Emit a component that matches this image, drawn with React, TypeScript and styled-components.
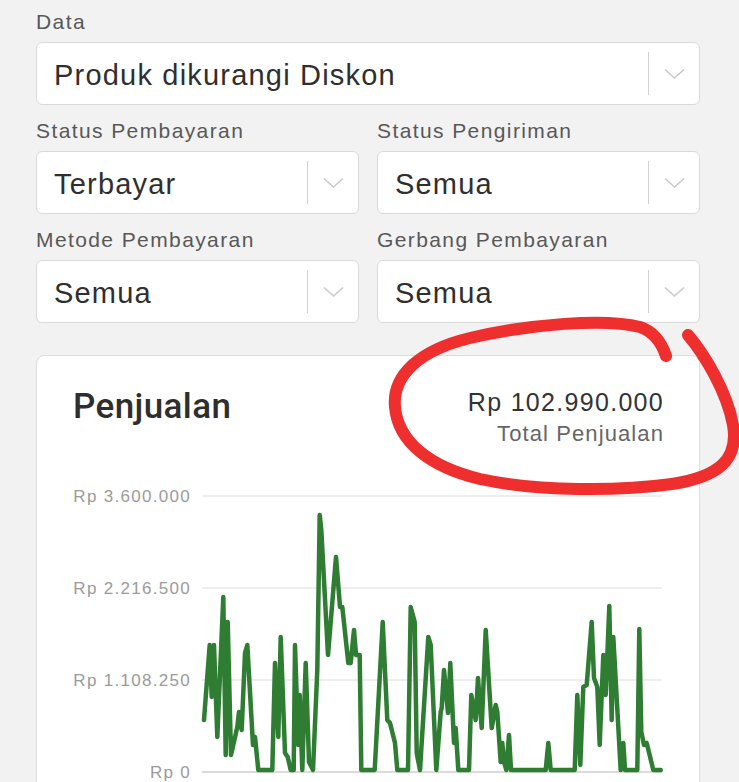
import React from "react";
import styled, { createGlobalStyle } from "styled-components";

const GlobalStyle = createGlobalStyle`
  html, body {
    margin: 0;
    padding: 0;
    background: #f2f2f2;
    overflow: hidden;
  }
  body {
    font-family: "Liberation Sans", Arial, sans-serif;
  }
  * { box-sizing: border-box; }
`;

const Root = styled.div`
  position: relative;
  width: 739px;
  height: 782px;
  overflow: hidden;
  padding: 10px 39px 0 36px;
`;

const Form = styled.div`
  display: flex;
  flex-direction: column;
  gap: 14px;
`;

const FieldGrid = styled.div`
  display: grid;
  grid-template-columns: 1fr 1fr;
  column-gap: 18px;
  row-gap: 14px;
`;

const Field = styled.div`
  display: flex;
  flex-direction: column;
`;

const Label = styled.div`
  font-size: 21px;
  line-height: 24px;
  color: #585858;
  letter-spacing: 1.4px;
  margin-bottom: 8px;
  white-space: nowrap;
`;

const SelectBox = styled.div`
  height: 63px;
  border: 1px solid #dadada;
  border-radius: 6px;
  background: #ffffff;
  display: flex;
  align-items: center;
`;

const SelectValue = styled.div`
  flex: 1;
  padding: 3px 0 0 17px;
  font-size: 29px;
  color: #2f2f2f;
  letter-spacing: 1.2px;
  white-space: nowrap;
  overflow: hidden;
`;

const Separator = styled.div`
  width: 1px;
  height: 43px;
  background: #d2d2d2;
`;

const ChevronWrap = styled.div`
  width: 50px;
  display: flex;
  align-items: center;
  justify-content: center;
`;

const Card = styled.div`
  margin-top: 32px;
  background: #ffffff;
  border: 1px solid #dedede;
  border-radius: 8px;
  padding: 31px 36px 0;
  height: 520px;
`;

const CardHeader = styled.div`
  display: flex;
  justify-content: space-between;
  align-items: flex-start;
`;

const Title = styled.div`
  font-family: Roboto, "Liberation Sans", sans-serif;
  font-weight: 500;
  font-size: 35px;
  line-height: 40px;
  letter-spacing: 0.4px;
  color: #2e2e2e;
`;

const Summary = styled.div`
  display: flex;
  flex-direction: column;
  align-items: flex-end;
  margin-right: -1px;
`;

const SummaryValue = styled.div`
  font-size: 25px;
  line-height: 30px;
  letter-spacing: 1.3px;
  color: #333333;
`;

const SummaryLabel = styled.div`
  margin-top: 3px;
  font-size: 22px;
  line-height: 28px;
  letter-spacing: 1.1px;
  color: #666666;
`;

const ChartSvg = styled.svg`
  display: block;
  margin-top: 32px;
  overflow: visible;
`;

const AxisText = styled.text`
  font-family: "Liberation Sans", Arial, sans-serif;
  font-size: 17px;
  letter-spacing: 1.3px;
  fill: #9b9b9b;
`;

const Annotation = styled.svg`
  position: absolute;
  top: 0;
  left: 0;
  pointer-events: none;
`;

const Chevron = () => (
  <svg width="21" height="12" viewBox="0 0 21 12">
    <path d="M1 1.5 L10.5 10 L20 1.5" fill="none" stroke="#c9c9c9" strokeWidth="1.5" />
  </svg>
);

const Select = ({ value }: { value: string }) => (
  <SelectBox>
    <SelectValue>{value}</SelectValue>
    <Separator />
    <ChevronWrap>
      <Chevron />
    </ChevronWrap>
  </SelectBox>
);

const SelectField = ({ label, value }: { label: string; value: string }) => (
  <Field>
    <Label>{label}</Label>
    <Select value={value} />
  </Field>
);

// page coordinates of the sales line
const points: [number, number][] = [
  [205, 720], [210.7, 645], [212.7, 697], [215, 645], [218.3, 737], [224.3, 597],
  [226.7, 755], [228.7, 622], [232, 755], [238.3, 727], [240, 712], [242.7, 730],
  [246, 653], [248.3, 645], [254, 745], [256, 737], [259.3, 770], [273.3, 770],
  [276, 663], [279.3, 737], [281.7, 637], [286, 753], [288.7, 757], [291.7, 770],
  [294.7, 770], [296, 645], [299.3, 745], [300.7, 695], [303.3, 770], [306.7, 663],
  [310, 762], [314, 770], [318.3, 670], [320.7, 515], [322.3, 530], [329, 655],
  [337, 557], [341, 607], [343.3, 607], [349.3, 663], [351.7, 663], [355, 630],
  [357, 655], [360.7, 655], [362.3, 770], [375.7, 770], [383.7, 622], [388.3, 720],
  [391, 723], [396, 743], [398.3, 770], [409, 770], [411.7, 607], [415.7, 622],
  [417.7, 753], [421, 770], [429.3, 637], [431.7, 645], [437.3, 770], [441.7, 712],
  [442.7, 708], [445, 670], [449, 713], [451.3, 663], [455, 743], [456.7, 728],
  [459.3, 770], [470, 770], [472.3, 695], [476.7, 720], [479, 678], [482.7, 728],
  [486.7, 630], [492.7, 728], [496.7, 705], [498.3, 712], [501.7, 762], [503.3, 743],
  [505, 762], [507.3, 770], [510, 735], [512, 770], [546.7, 770], [549.3, 743],
  [551.7, 770], [575.7, 770], [578.3, 695], [581.3, 765], [584.3, 687], [587.7, 685],
  [592.7, 622], [595, 678], [598.3, 687], [600.7, 745], [604.3, 655], [606.7, 695],
  [610.3, 606], [612.7, 720], [614.3, 637], [621.7, 770], [624.3, 743], [626, 770],
  [638.3, 770], [640.3, 629], [642.3, 732], [645, 745], [647.7, 743], [654.3, 770],
  [661.7, 770],
];

const OX = 74;
const OY = 480;
const linePoints = points.map(([x, y]) => `${(x - OX).toFixed(1)},${(y - OY).toFixed(1)}`).join(" ");

const axis = [
  { label: "Rp 3.600.000", y: 16 },
  { label: "Rp 2.216.500", y: 108 },
  { label: "Rp 1.108.250", y: 200 },
  { label: "Rp 0", y: 292 },
];

const SalesChart = () => (
  <ChartSvg width="589" height="330" viewBox="0 0 589 330">
    {axis.map((a, i) => (
      <g key={a.label}>
        <line
          x1="129"
          x2="589"
          y1={a.y}
          y2={a.y}
          stroke={i === axis.length - 1 ? "#cfcfcf" : "#e8e8e8"}
          strokeWidth="1.5"
        />
        <AxisText x="118" y={a.y + 6} textAnchor="end">
          {a.label}
        </AxisText>
      </g>
    ))}
    <polyline
      points={linePoints}
      fill="none"
      stroke="#2e7d32"
      strokeWidth="4.5"
      strokeLinejoin="round"
      strokeLinecap="round"
    />
  </ChartSvg>
);

export default function App() {
  return (
    <>
      <GlobalStyle />
      <Root>
        <Form>
          <SelectField label="Data" value="Produk dikurangi Diskon" />
          <FieldGrid>
            <SelectField label="Status Pembayaran" value="Terbayar" />
            <SelectField label="Status Pengiriman" value="Semua" />
            <SelectField label="Metode Pembayaran" value="Semua" />
            <SelectField label="Gerbang Pembayaran" value="Semua" />
          </FieldGrid>
        </Form>
        <Card>
          <CardHeader>
            <Title>Penjualan</Title>
            <Summary>
              <SummaryValue>Rp 102.990.000</SummaryValue>
              <SummaryLabel>Total Penjualan</SummaryLabel>
            </Summary>
          </CardHeader>
          <SalesChart />
        </Card>
        <Annotation width="739" height="782" viewBox="0 0 739 782">
          <path
            d="M688 335 C705 355 727 392 733 425 C739 460 718 477 672 484 C620 491 540 492 480 479 C430 467 398 442 395 407 C392 375 420 350 470 338 C530 324 605 318 640 327 C655 332 662 344 666 356"
            fill="none"
            stroke="#ef2e2e"
            strokeWidth="12"
            strokeLinecap="round"
            strokeLinejoin="round"
          />
        </Annotation>
      </Root>
    </>
  );
}
